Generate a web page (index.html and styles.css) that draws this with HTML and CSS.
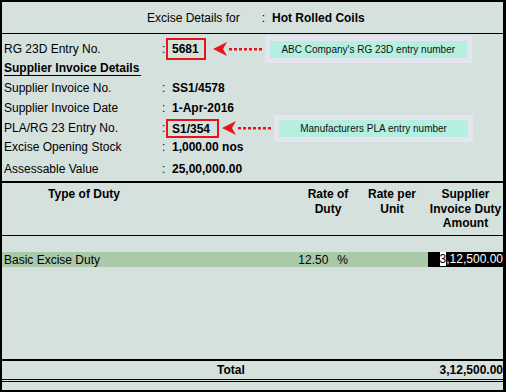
FILE: index.html
```html
<!DOCTYPE html>
<html lang="en">
<head>
    <meta charset="UTF-8">
    <meta name="viewport" content="width=device-width, initial-scale=1.0">
    <title>Excise Details</title>
    <link rel="stylesheet" href="styles.css">
</head>
<body>
    <div class="window">
        <div class="title">
            <span class="title-label">Excise Details for</span>
            <span class="title-colon">:</span>
            <span class="title-value">Hot Rolled Coils</span>
        </div>

        <div class="details">
            <div class="row row-1">
                <span class="label">RG 23D Entry No.</span>
                <span class="colon">:</span>
                <span class="value boxed boxed-1">5681</span>
                <svg class="arrow arrow-1" width="52" height="14" viewBox="0 0 52 14">
                    <path d="M0 7 L14 0 L10 7 L14 14 Z" fill="#e8141c"/>
                    <g fill="#e8141c">
                        <rect x="16" y="6" width="3" height="2.5"/>
                        <rect x="21" y="6" width="3" height="2.5"/>
                        <rect x="26" y="6" width="3" height="2.5"/>
                        <rect x="31" y="6" width="3" height="2.5"/>
                        <rect x="36" y="6" width="3" height="2.5"/>
                        <rect x="41" y="6" width="3" height="2.5"/>
                        <rect x="46" y="6" width="3" height="2.5"/>
                    </g>
                </svg>
                <div class="callout callout-1"><span>ABC Company's RG 23D entry number</span></div>
            </div>
            <div class="row row-2">
                <span class="section-title">Supplier Invoice Details</span>
            </div>
            <div class="row">
                <span class="label">Supplier Invoice No.</span>
                <span class="colon">:</span>
                <span class="value">SS1/4578</span>
            </div>
            <div class="row">
                <span class="label">Supplier Invoice Date</span>
                <span class="colon">:</span>
                <span class="value">1-Apr-2016</span>
            </div>
            <div class="row">
                <span class="label">PLA/RG 23 Entry No.</span>
                <span class="colon">:</span>
                <span class="value boxed boxed-2">S1/354</span>
                <svg class="arrow arrow-2" width="52" height="14" viewBox="0 0 52 14">
                    <path d="M0 7 L14 0 L10 7 L14 14 Z" fill="#e8141c"/>
                    <g fill="#e8141c">
                        <rect x="16" y="6" width="3" height="2.5"/>
                        <rect x="21" y="6" width="3" height="2.5"/>
                        <rect x="26" y="6" width="3" height="2.5"/>
                        <rect x="31" y="6" width="3" height="2.5"/>
                        <rect x="36" y="6" width="3" height="2.5"/>
                        <rect x="41" y="6" width="3" height="2.5"/>
                        <rect x="46" y="6" width="3" height="2.5"/>
                    </g>
                </svg>
                <div class="callout callout-2"><span>Manufacturers PLA entry number</span></div>
            </div>
            <div class="row row-6">
                <span class="label">Excise Opening Stock</span>
                <span class="colon">:</span>
                <span class="value">1,000.00 nos</span>
            </div>
            <div class="row row-7">
                <span class="label">Assessable Value</span>
                <span class="colon">:</span>
                <span class="value">25,00,000.00</span>
            </div>
        </div>

        <div class="table-head">
            <div class="col-type">Type of Duty</div>
            <div></div>
            <div class="col-rate">Rate of<br>Duty</div>
            <div class="col-unit">Rate per<br>Unit</div>
            <div class="col-amount">Supplier<br>Invoice Duty<br>Amount</div>
        </div>

        <div class="table-body">
            <div class="duty-row">
                <div class="duty-name">Basic Excise Duty</div>
                <div></div>
                <div class="duty-rate"><span>12.50</span><span>%</span></div>
                <div></div>
                <div class="duty-amount"><span class="cursor">3</span>,12,500.00</div>
            </div>
        </div>

        <div class="total-row">
            <div class="total-label">Total</div>
            <div class="total-amount">3,12,500.00</div>
        </div>
        <div class="footer"></div>
    </div>
</body>
</html>
```

FILE: styles.css
```css
body {
    margin: 0;
    font-family: "Liberation Sans", Arial, sans-serif;
    font-size: 12px;
    color: #000;
    background-color: #fff;
}
.window {
    width: 506px;
    height: 392px;
    box-sizing: border-box;
    border-top: 2px solid #000;
    border-left: 2px solid #000;
    border-right: 3px solid #000;
    border-bottom: 2px solid #000;
    background-color: #d5e1dd;
    display: flex;
    flex-direction: column;
}
.title {
    height: 31px;
    flex-shrink: 0;
    border-bottom: 1px solid #000;
    display: flex;
    align-items: center;
    padding-left: 145px;
}
.title-colon {
    margin-left: 22px;
}
.title-value {
    margin-left: 7px;
    font-weight: bold;
}
.details {
    height: 149px;
    flex-shrink: 0;
    box-sizing: border-box;
    border-bottom: 2px solid #000;
    padding-top: 5px;
}
.row {
    height: 20px;
    display: flex;
    align-items: center;
    padding-left: 2px;
}
.row-2 {
    height: 19px;
}
.row-6 {
    height: 17px;
}
.row-7 {
    height: 22px;
    margin-top: 3px;
}
.label {
    width: 158px;
}
.colon {
    width: 4px;
}
.value {
    font-weight: bold;
    padding-left: 6px;
}
.section-title {
    font-weight: bold;
    border-bottom: 1px solid #000;
    line-height: 14px;
    padding-right: 2px;
}
.boxed {
    border: 2px solid #e8141c;
    line-height: 14px;
}
.boxed-1 {
    padding: 2px 5px 2px 4px;
}
.boxed-2 {
    padding: 1px 7px 0 4px;
}
.arrow {
    flex-shrink: 0;
}
.arrow-1 {
    margin-left: 7px;
}
.arrow-2 {
    margin-left: 3px;
}
.callout {
    background-color: #e5e5ef;
    padding: 5px;
    flex-shrink: 0;
}
.callout span {
    display: block;
    height: 17px;
    line-height: 17px;
    background-color: #b4efdf;
    font-size: 10px;
    color: #111;
    text-align: center;
}
.callout-1 span {
    width: 197px;
}
.callout-2 span {
    width: 189px;
}
.table-head {
    height: 53px;
    flex-shrink: 0;
    box-sizing: border-box;
    border-bottom: 1px solid #000;
    display: grid;
    grid-template-columns: 164px 134px 56px 66px 81px;
    padding-top: 4px;
    font-weight: bold;
    line-height: 14.5px;
    text-align: center;
}
.col-unit,
.col-amount {
    padding-left: 6px;
}
.table-body {
    flex: 1;
    padding-top: 16px;
}
.duty-row {
    height: 15px;
    display: grid;
    grid-template-columns: 164px 134px 56px 66px 81px;
    align-items: center;
    background-color: #a9c9a9;
}
.duty-name {
    padding-left: 2px;
}
.duty-rate {
    display: flex;
    justify-content: flex-end;
    gap: 9px;
    padding-right: 8px;
}
.duty-amount {
    height: 15px;
    line-height: 15px;
    background-color: #000;
    color: #fff;
    text-align: right;
    margin-left: 6px;
}
.cursor {
    background-color: #fff;
    color: #000;
}
.total-row {
    height: 23px;
    flex-shrink: 0;
    box-sizing: border-box;
    border-top: 2px solid #000;
    border-bottom: 3px double #000;
    display: flex;
    align-items: center;
    font-weight: bold;
}
.total-label {
    padding-left: 215px;
}
.total-amount {
    margin-left: auto;
}
.footer {
    height: 8px;
    flex-shrink: 0;
}
```
